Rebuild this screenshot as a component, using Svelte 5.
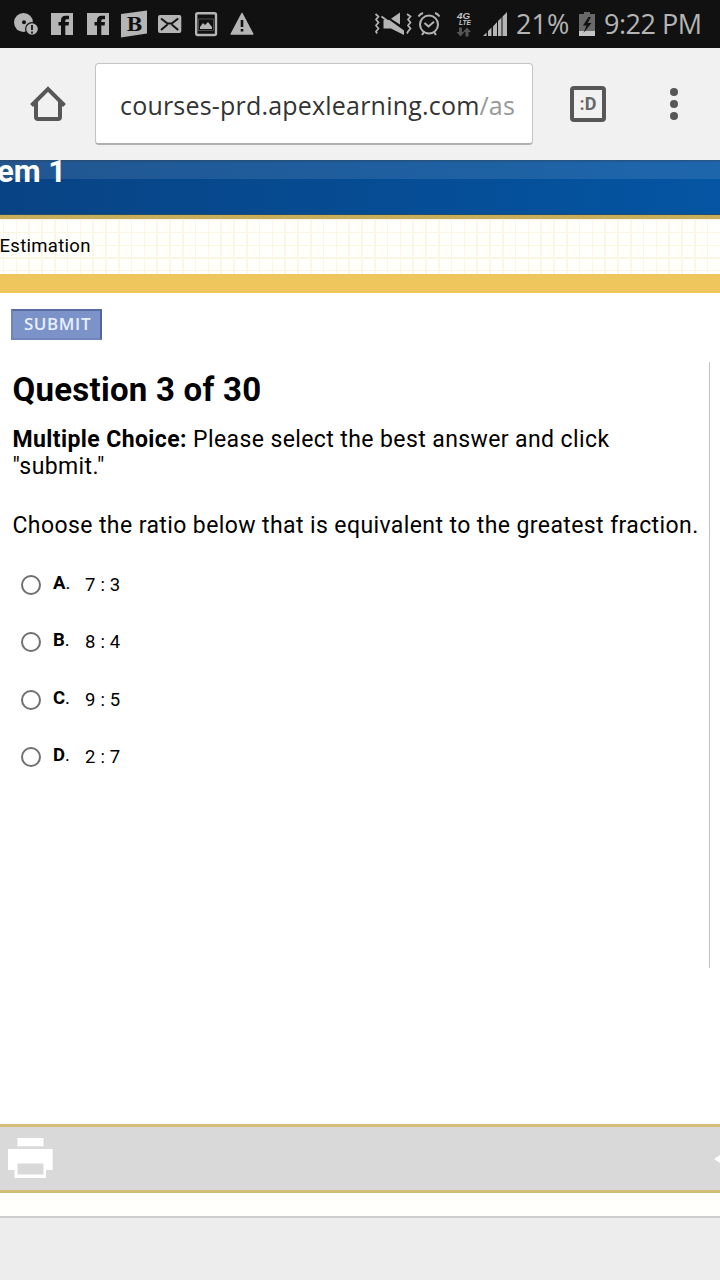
<script lang="ts">
  type Option = {
    letter: string;
    ratio: string;
  };

  const options: Option[] = [
    { letter: "A", ratio: "7 : 3" },
    { letter: "B", ratio: "8 : 4" },
    { letter: "C", ratio: "9 : 5" },
    { letter: "D", ratio: "2 : 7" }
  ];

  let selected = "";
</script>

<div class="screen">
  <header class="status">
    <div class="notifications">
      <svg width="36" height="48" viewBox="0 0 36 48">
        <circle cx="15.500" cy="22.500" r="9.500" fill="#b5b5b5" />
        <circle cx="16" cy="22.300" r="2" fill="#111" />
        <circle cx="24" cy="29" r="7" fill="#111" />
        <circle cx="24" cy="29" r="5.800" fill="#b5b5b5" />
        <path d="M24 25v5M24 31.500v2" stroke="#111" stroke-width="1.800" />
      </svg>
      {#each [0, 1] as n (n)}
        <svg width="36" height="48" viewBox="0 0 36 48">
          <path fill="#b5b5b5" d="M7 13h22v22H7z" />
          <path
            fill="#111"
            d="M17 35V25.500h-2.500v-3.600H17V20.500c0-3.200 1.700-4.700 4.500-4.700H25v3.500h-2.300c-1 0-1.400.6-1.400 1.500v1.100H25l-.4 3.600h-3.300v9.500z"
          />
        </svg>
      {/each}
      <svg width="36" height="48" viewBox="0 0 36 48">
        <path fill="#b5b5b5" d="M5 14l26-3.500v23L5 37.500z" />
        <text class="badge-b" x="10.500" y="31">B</text>
      </svg>
      <svg width="36" height="48" viewBox="0 0 36 48">
        <rect x="6" y="15" width="23.300" height="18" rx="2" fill="#b5b5b5" />
        <path d="M9 18.500l6.500 5h4.200l6.500-5M9 30l6.500-5.500M26.200 30l-6.500-5.500" fill="none" stroke="#111" stroke-width="1.900" />
      </svg>
      <svg width="36" height="48" viewBox="0 0 36 48">
        <rect x="8.200" y="13.200" width="19.800" height="21.800" rx="1.500" fill="none" stroke="#b5b5b5" stroke-width="2.400" />
        <rect x="10.500" y="19" width="15" height="11.500" fill="none" stroke="#777" stroke-width=".6" />
        <path fill="#b5b5b5" d="M12 29v-2l3-4 2 2 3-3 4 5v2z" />
      </svg>
      <svg width="36" height="48" viewBox="0 0 36 48">
        <path fill="#b5b5b5" stroke="#b5b5b5" stroke-width="1.500" stroke-linejoin="round" d="M18 13.500L7.200 34h21.600z" />
        <path d="M18 20v7M18 29v2.600" stroke="#111" stroke-width="2.600" />
      </svg>
    </div>

    <div class="system">
      <svg width="40" height="48" viewBox="0 0 40 48">
        <path
          d="M2.500 14l3 2.500-2.500 3 2.500 3-2.500 3 2.500 3-2.500 3 1 2M34 14l3.500 2.500-2.500 3 2.500 3-2.500 3 2.500 3-2.500 3-1 2"
          fill="none"
          stroke="#b5b5b5"
          stroke-width="1.700"
        />
        <path fill="#b5b5b5" d="M10.500 20h6l14.500 10.500v4.500L18 28.500h-7.500z" />
        <path fill="#b5b5b5" d="M18 18.800L27 12.500v12z" />
        <path d="M8.500 16.500l22 16" stroke="#b5b5b5" stroke-width="1.800" />
      </svg>
      <svg width="34" height="48" viewBox="0 0 34 48">
        <g fill="none" stroke="#b5b5b5" stroke-width="2">
          <circle cx="16" cy="24.500" r="9" />
          <path d="M11.500 23l4 3.500 5.500-4.700M11 32l-2 3M21 32l2 3" />
          <path d="M5.500 16.500q1.500-2.500 4.500-3.500M26.500 16.500q-1.500-2.500-4.500-3.500" />
        </g>
      </svg>
      <svg width="30" height="48" viewBox="0 0 30 48">
        <text class="network" x="10" y="18.500" textLength="13" lengthAdjust="spacingAndGlyphs">4G</text>
        <text class="network small" x="12" y="25.200" textLength="12" lengthAdjust="spacingAndGlyphs">LTE</text>
        <path fill="#555" d="M12 27.500h3V32h2.500l-4 4.500-4-4.500H12zM18.500 36.500h3V32H24l-4-4.500-4 4.500h2.500z" />
      </svg>
      <svg class="signal" width="26" height="48" viewBox="0 0 26 48">
        <path fill="#b5b5b5" d="M0 36h3.500v-3.500L0 36zM5 36h3.500v-8.500L5 31zM10 36h4V22l-4 4.500zM15 36h3.500V17.500L15 21zM19.500 36H24V12l-4.500 4.500z" />
      </svg>
      <span class="percent">21%</span>
      <svg class="battery" width="16" height="48" viewBox="0 0 16 48">
        <path fill="#696969" d="M0 14h5v-2h6v2h5v17H0z" />
        <path fill="#c5c5c5" d="M0 31h16v5H0z" />
        <path fill="#111" d="M9.500 17L4 25.500h3.500L4.500 33 12.500 23H8.700L12 17z" />
      </svg>
      <span class="clock">9:22 PM</span>
    </div>
  </header>

  <nav class="toolbar">
    <svg class="home" width="40" height="40" viewBox="0 0 40 40">
      <path
        d="M3.500 21.500L20 5l16.500 16.500M8 18v15q0 2 2 2h20q2 0 2-2V18"
        fill="none"
        stroke="#575757"
        stroke-width="4"
      />
    </svg>
    <div class="address">
      <span class="host">courses-prd.apexlearning.com</span><span class="path">/as</span>
    </div>
    <div class="tabs">:D</div>
    <div class="menu"><i></i><i></i><i></i></div>
  </nav>

  <div class="banner"><b>em 1</b></div>
  <div class="crumbs">Estimation</div>
  <div class="gold"></div>

  <main>
    <button class="submit" type="button">SUBMIT</button>
    <section class="question">
      <h1>Question 3 of 30</h1>
      <p class="hint"><b>Multiple Choice:</b> <span>Please select the best answer and click</span><br />"submit."</p>
      <p class="prompt">Choose the ratio below that is equivalent to the greatest fraction.</p>
      <div class="options">
        {#each options as option (option.letter)}
          <label>
            <input type="radio" name="answer" value={option.letter} bind:group={selected} />
            <span class="letter"><b>{option.letter}</b>.</span>
            <span class="ratio">{option.ratio}</span>
          </label>
        {/each}
      </div>
    </section>
  </main>

  <footer>
    <svg width="46" height="42" viewBox="0 0 46 42">
      <path fill="#fff" d="M9.500 0h26v8.300h-26z" />
      <path fill="#fff" fill-rule="evenodd" d="M0 11h44.600v21H38v8H6.500v-8H0zM9.500 25.500h26v11h-26z" />
    </svg>
    <svg width="6" height="10" viewBox="0 0 6 10">
      <path fill="#fff" d="M0 5l6-4v8z" />
    </svg>
  </footer>
  <div class="edge"></div>
</div>

<style>
:global(body) {
  background: #fff;
}
.screen {
  width: 720px;
  height: 1280px;
  overflow: hidden;
  display: flex;
  flex-direction: column;
  font-family: Roboto, "Liberation Sans", sans-serif;
  color: #000;
  background: #ededed;
}
svg {
  display: block;
  flex: none;
}
.status {
  height: 48px;
  flex: none;
  display: flex;
  justify-content: space-between;
  background: #111;
  color: #b5b5b5;
}
.notifications {
  display: flex;
  padding-left: 8px;
}
.badge-b {
  font: bold 19px "DejaVu Serif", serif;
  fill: #111;
}
.system {
  display: flex;
  width: 347px;
  font: 500 27px/48px "Open Sans", sans-serif;
  white-space: nowrap;
}
.network {
  font: italic bold 9px "Liberation Sans", sans-serif;
  fill: #c5c5c5;
}
.network.small {
  font-size: 7px;
}
.signal {
  margin-left: 6px;
}
.percent {
  width: 63px;
  flex: none;
  padding-left: 7px;
  box-sizing: border-box;
}
.battery {
  margin: 0 9px 0 7px;
}
.clock {
  letter-spacing: -0.5px;
}
.toolbar {
  height: 112px;
  flex: none;
  display: flex;
  align-items: center;
  background: #f1f1f1;
}
.home {
  margin: 0 27px 0 28px;
}
.address {
  width: 438px;
  height: 82px;
  box-sizing: border-box;
  padding: 0 16px 0 24px;
  border: 1px solid #c4c4c4;
  border-bottom: 2px solid #b0b0b0;
  border-radius: 4px;
  background: #fff;
  font: 500 25px/82px "Open Sans", sans-serif;
  letter-spacing: 0.2px;
  white-space: nowrap;
  overflow: hidden;
  display: flex;
}
.host {
  color: #333;
}
.path {
  color: #999;
  overflow: hidden;
}
.tabs {
  width: 36px;
  height: 36px;
  box-sizing: border-box;
  margin-left: 37px;
  border: 4px solid #575757;
  border-radius: 4px;
  color: #666;
  font: bold 18px/27px Roboto, sans-serif;
  text-align: center;
}
.menu {
  margin-left: 64px;
  display: grid;
  gap: 4px;
}
.menu i {
  width: 8px;
  height: 8px;
  border-radius: 50%;
  background: #575757;
}
.banner {
  height: 55px;
  flex: none;
  box-sizing: border-box;
  background:
    linear-gradient(#3335, #3330 3px) no-repeat,
    linear-gradient(rgba(255, 255, 255, 0.1), rgba(255, 255, 255, 0.1)) 0 0 / 100% 19px no-repeat,
    linear-gradient(90deg, #084384, #0455a3);
  border-bottom: 1px solid #264e63;
  color: #fff;
  font-size: 31px;
  line-height: 23px;
  text-indent: -3px;
}
.crumbs {
  height: 59px;
  flex: none;
  box-sizing: border-box;
  border-top: 4px solid #c8ad5c;
  background:
    repeating-linear-gradient(90deg, transparent 0 2.800px, #fbf6e6 2.800px 4.400px, transparent 4.400px 12.800px),
    repeating-linear-gradient(#fbf5e4 0 1.300px, transparent 1.300px 12.800px),
    #fffffc;
  font-size: 18.500px;
  line-height: 55px;
  letter-spacing: 0.3px;
  text-indent: -0.5px;
}
.gold {
  height: 19px;
  flex: none;
  background: #efc55d;
}
main {
  height: 831px;
  flex: none;
  box-sizing: border-box;
  padding: 16px 10px 0 11px;
  background: #fff;
}
.submit {
  display: block;
  width: 91px;
  height: 31px;
  padding: 0 0 1px 2px;
  border: 2px solid #7186b8;
  border-top-color: #596c9e;
  border-right-color: #53669b;
  background: #7b93c8;
  color: #e8efff;
  font: 600 17px/26px "Open Sans", sans-serif;
  letter-spacing: 0.6px;
}
.question {
  height: 606px;
  margin-top: 22px;
  padding-left: 1.500px;
  box-sizing: border-box;
  border-right: 1px solid #c0c0c0;
  white-space: nowrap;
}
h1 {
  margin: 0;
  padding-top: 8px;
  font-size: 33px;
  line-height: 40px;
  letter-spacing: 0.25px;
}
p {
  margin: 0;
  font-size: 23px;
  line-height: 27px;
  letter-spacing: 0.4px;
}
.hint {
  padding-top: 16px;
}
.prompt {
  padding-top: 32px;
}
.options {
  padding: 17px 0 0 8.500px;
}
label {
  height: 57.500px;
  display: flex;
  align-items: center;
  font-size: 18.500px;
}
input {
  appearance: none;
  width: 20px;
  height: 20px;
  margin: 0;
  box-sizing: border-box;
  border: 2px solid #707070;
  border-radius: 50%;
  background: #fff;
}
.letter {
  width: 32px;
  margin-left: 12px;
  padding-bottom: 4px;
}
.ratio {
  letter-spacing: 0.2px;
}
footer {
  height: 69px;
  flex: none;
  box-sizing: border-box;
  padding-left: 8px;
  display: flex;
  align-items: center;
  justify-content: space-between;
  border-top: 3px solid #d5bd79;
  border-bottom: 3px solid #d3bc74;
  background: #d9d9d9;
}
.edge {
  height: 25px;
  flex: none;
  box-sizing: border-box;
  border-bottom: 2px solid #cdcdcd;
  background: #fffffc;
}
</style>
